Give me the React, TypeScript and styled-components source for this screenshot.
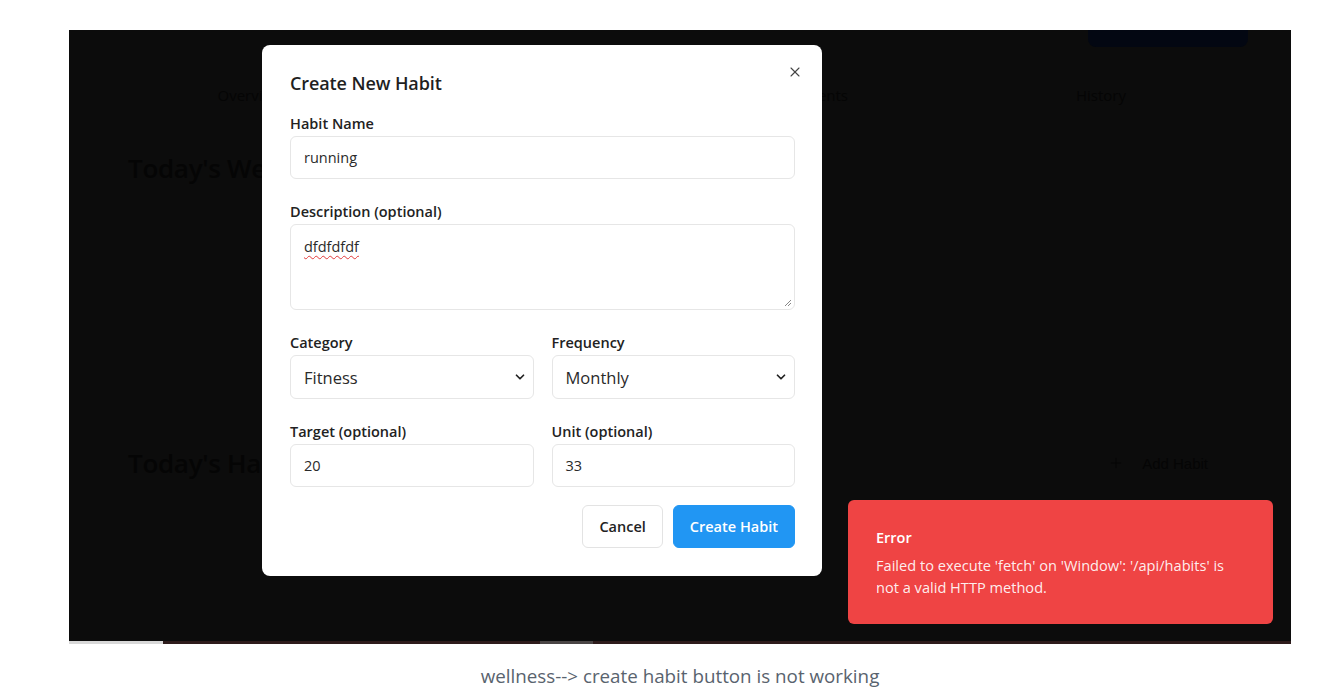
import React from "react"
import styled, { createGlobalStyle } from "styled-components"
import { ChevronDown, Plus, X } from "lucide-react"

const GlobalStyle = createGlobalStyle`
  html, body {
    margin: 0;
    padding: 0;
    background: #ffffff;
  }
  body {
    font-family: "Open Sans", "Noto Sans", sans-serif;
    -webkit-font-smoothing: antialiased;
  }
  * {
    box-sizing: border-box;
  }
`

const Page = styled.div`
  padding: 30px 0 0 69px;
`

const Shot = styled.div`
  position: relative;
  width: 1222px;
  height: 614px;
  background: #0c0c0c;
  overflow: hidden;
  display: flex;
  flex-direction: column;
`

/* dimmed app behind the dialog */
const AppBehind = styled.div`
  flex: 1;
  display: flex;
  flex-direction: column;
  padding: 0 83px 0 59px;
  color: #050505;
`

const TopBar = styled.div`
  display: flex;
  justify-content: flex-end;
  margin-right: -40px;
`

const DarkPill = styled.div`
  width: 160px;
  height: 42px;
  margin-top: -25px;
  border-radius: 8px;
  background: #030712;
`

const Tabs = styled.div`
  display: grid;
  grid-template-columns: 284px 284px 246px 358px;
  margin: 38px 0 0 -20px;
  font-size: 15px;
  height: 20px;
  line-height: 20px;
`

const Tab = styled.div`
  text-align: center;
`

const SectionTitle = styled.h2`
  margin: 0;
  font-size: 26px;
  font-weight: 600;
  line-height: 34px;
  letter-spacing: -0.3px;
`

const WellnessBlock = styled.div`
  margin-top: 46px;
  height: 295px;
`

const HabitsHead = styled.div`
  display: flex;
  align-items: center;
  justify-content: space-between;
`

const AddHabit = styled.div`
  display: flex;
  align-items: center;
  gap: 18px;
  font-size: 15px;
  font-family: "Liberation Sans", sans-serif;
`

const BottomStrip = styled.div`
  height: 3px;
  display: flex;
`

const StripPart = styled.div<{ $w: number; $c: string }>`
  width: ${(p) => p.$w}px;
  flex-shrink: 0;
  background: ${(p) => p.$c};
`

/* dialog */
const Dialog = styled.div`
  position: absolute;
  left: 193px;
  top: 15px;
  width: 560px;
  background: #ffffff;
  border-radius: 8px;
  padding: 24px 27px 28px 28px;
  color: #1f1f1f;
`

const DialogTitle = styled.h3`
  margin: 0 0 17px;
  font-size: 18px;
  font-weight: 600;
  line-height: 28px;
  letter-spacing: -0.1px;
`

const CloseButton = styled.button`
  position: absolute;
  right: 19px;
  top: 19px;
  width: 16px;
  height: 16px;
  padding: 0;
  border: 0;
  background: none;
  color: #444;
  display: flex;
  align-items: center;
  justify-content: center;
`

const Form = styled.div`
  display: flex;
  flex-direction: column;
  gap: 23px;
`

const Row = styled.div`
  display: grid;
  grid-template-columns: 1fr 1fr;
  gap: 18px;
`

const Field = styled.div`
  display: flex;
  flex-direction: column;
  gap: 2px;
`

const Label = styled.label`
  font-size: 14.5px;
  font-weight: 600;
  line-height: 20px;
  color: #222;
`

const TextInput = styled.div<{ $tall?: boolean }>`
  height: ${(p) => (p.$tall ? 86 : 43)}px;
  border: 1px solid #e6e6e6;
  border-radius: 6px;
  padding: ${(p) => (p.$tall ? "12px 13px" : "0 13px")};
  display: flex;
  align-items: ${(p) => (p.$tall ? "flex-start" : "center")};
  font-size: 14.5px;
  color: #2a2a2a;
  position: relative;
`

const Misspelt = styled.span`
  text-decoration: underline wavy #e23b3b;
  text-decoration-thickness: 1px;
  text-underline-offset: 3px;
`

const Grip = styled.svg`
  position: absolute;
  right: 2px;
  bottom: 2px;
`

const SelectBox = styled.div`
  height: 44px;
  border: 1px solid #e6e6e6;
  border-radius: 6px;
  padding: 0 6px 0 13px;
  display: flex;
  align-items: center;
  justify-content: space-between;
  font-size: 16.5px;
  color: #2a2a2a;
`

const Actions = styled.div`
  display: flex;
  justify-content: flex-end;
  gap: 10px;
  margin-top: -5px;
`

const Button = styled.button<{ $primary?: boolean }>`
  height: 43px;
  padding: 0 16px;
  border-radius: 6px;
  border: 1px solid ${(p) => (p.$primary ? "#2196f3" : "#e3e3e3")};
  background: ${(p) => (p.$primary ? "#2196f3" : "#ffffff")};
  color: ${(p) => (p.$primary ? "#ffffff" : "#222")};
  font-family: inherit;
  font-size: 14.5px;
  font-weight: 600;
`

/* toast */
const Toast = styled.div`
  position: absolute;
  left: 779px;
  top: 470px;
  width: 425px;
  height: 124px;
  background: #ef4444;
  border-radius: 6px;
  padding: 28px 40px 26px 28px;
  color: #ffffff;
`

const ToastTitle = styled.div`
  font-size: 14.5px;
  font-weight: 600;
  line-height: 20px;
  margin-bottom: 6px;
`

const ToastText = styled.div`
  font-size: 14.6px;
  line-height: 22px;
  color: rgba(255, 255, 255, 0.92);
`

const Caption = styled.p`
  width: 1222px;
  margin: 20px 0 0;
  text-align: center;
  font-size: 18.8px;
  line-height: 24px;
  color: #59636e;
`

export default function App() {
  return (
    <>
      <GlobalStyle />
      <Page>
        <Shot>
          <AppBehind>
            <TopBar>
              <DarkPill />
            </TopBar>
            <Tabs>
              <Tab>Overview</Tab>
              <Tab>Habits</Tab>
              <Tab>Achievements</Tab>
              <Tab>History</Tab>
            </Tabs>
            <WellnessBlock>
              <SectionTitle>Today's Wellness</SectionTitle>
            </WellnessBlock>
            <HabitsHead>
              <SectionTitle>Today's Habits</SectionTitle>
              <AddHabit>
                <Plus size={16} strokeWidth={1.5} />
                Add Habit
              </AddHabit>
            </HabitsHead>
          </AppBehind>
          <BottomStrip>
            <StripPart $w={94} $c="#d8d8d8" />
            <StripPart $w={377} $c="#2e1c1c" />
            <StripPart $w={53} $c="#4a4545" />
            <StripPart $w={698} $c="#2e1c1c" />
          </BottomStrip>

          <Dialog>
            <CloseButton aria-label="Close">
              <X size={16} strokeWidth={1.6} />
            </CloseButton>
            <DialogTitle>Create New Habit</DialogTitle>
            <Form>
              <Field>
                <Label>Habit Name</Label>
                <TextInput>running</TextInput>
              </Field>
              <Field>
                <Label>Description (optional)</Label>
                <TextInput $tall>
                  <Misspelt>dfdfdfdf</Misspelt>
                  <Grip width="9" height="9" viewBox="0 0 9 9">
                    <path d="M8 2 L2 8 M8 5 L5 8" stroke="#888" strokeWidth="1" />
                  </Grip>
                </TextInput>
              </Field>
              <Row>
                <Field>
                  <Label>Category</Label>
                  <SelectBox>
                    Fitness
                    <ChevronDown size={14} strokeWidth={3} color="#222" />
                  </SelectBox>
                </Field>
                <Field>
                  <Label>Frequency</Label>
                  <SelectBox>
                    Monthly
                    <ChevronDown size={14} strokeWidth={3} color="#222" />
                  </SelectBox>
                </Field>
              </Row>
              <Row>
                <Field>
                  <Label>Target (optional)</Label>
                  <TextInput>20</TextInput>
                </Field>
                <Field>
                  <Label>Unit (optional)</Label>
                  <TextInput>33</TextInput>
                </Field>
              </Row>
              <Actions>
                <Button>Cancel</Button>
                <Button $primary>Create Habit</Button>
              </Actions>
            </Form>
          </Dialog>

          <Toast>
            <ToastTitle>Error</ToastTitle>
            <ToastText>
              Failed to execute 'fetch' on 'Window': '/api/habits' is not a valid HTTP method.
            </ToastText>
          </Toast>
        </Shot>
        <Caption>wellness--&gt; create habit button is not working</Caption>
      </Page>
    </>
  )
}
